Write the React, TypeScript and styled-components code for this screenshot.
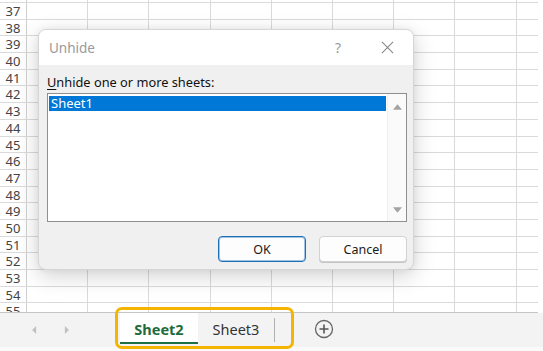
import React from 'react'
import styled, { createGlobalStyle } from 'styled-components'

const GlobalStyle = createGlobalStyle`
  html, body {
    margin: 0;
    padding: 0;
    background: #ffffff;
  }
  body {
    font-family: 'Noto Sans', 'Open Sans', sans-serif;
  }
`

const ROWS = Array.from({ length: 19 }, (_, i) => 37 + i)
const COLS = 9

export default function App() {
  return (
    <>
      <GlobalStyle />
      <Screen>
        <Sheet>
          <TopStub>
            <HeaderCell />
            {Array.from({ length: COLS }).map((_, c) => (
              <Cell key={c} />
            ))}
          </TopStub>
          {ROWS.map((r) => (
            <Row key={r}>
              <HeaderCell>{r}</HeaderCell>
              {Array.from({ length: COLS }).map((_, c) => (
                <Cell key={c} />
              ))}
            </Row>
          ))}
        </Sheet>

        <TabBar>
          <NavArrows>
            <Arrow viewBox="0 0 6 10">
              <path d="M5 0 L0 5 L5 10 Z" />
            </Arrow>
            <Arrow viewBox="0 0 6 10">
              <path d="M1 0 L6 5 L1 10 Z" />
            </Arrow>
          </NavArrows>
          <Tabs>
            <Tab active>Sheet2</Tab>
            <Tab>Sheet3</Tab>
            <TabDivider />
          </Tabs>
          <AddSheet viewBox="0 0 20 20">
            <circle cx="10" cy="10" r="8.5" fill="none" stroke="#666" strokeWidth="1.3" />
            <path d="M10 5.5 V14.5 M5.5 10 H14.5" stroke="#555" strokeWidth="1.6" />
          </AddSheet>
        </TabBar>
        <BottomEdge />

        <Highlight />

        <Dialog>
          <TitleBar>
            <Title>Unhide</Title>
            <TitleIcons>
              <HelpMark>?</HelpMark>
              <CloseIcon viewBox="0 0 14 14">
                <path d="M1 1 L13 13 M13 1 L1 13" stroke="#8a8a8a" strokeWidth="1.2" />
              </CloseIcon>
            </TitleIcons>
          </TitleBar>
          <Body>
            <Label>
              <u>U</u>nhide one or more sheets:
            </Label>
            <ListBox>
              <Items>
                <Item selected>Sheet1</Item>
              </Items>
              <ScrollBar>
                <ScrollArrow viewBox="0 0 10 6">
                  <path d="M0 6 L5 0 L10 6 Z" />
                </ScrollArrow>
                <ScrollArrow viewBox="0 0 10 6">
                  <path d="M0 0 L5 6 L10 0 Z" />
                </ScrollArrow>
              </ScrollBar>
            </ListBox>
            <Buttons>
              <Button primary>OK</Button>
              <Button>Cancel</Button>
            </Buttons>
          </Body>
        </Dialog>
      </Screen>
    </>
  )
}

const Screen = styled.div`
  position: relative;
  width: 543px;
  height: 351px;
  overflow: hidden;
  display: flex;
  flex-direction: column;
  background: #ffffff;
`

const Sheet = styled.div`
  height: 313px;
  width: 538px;
  overflow: hidden;
  border-bottom: 1px solid #c6c6c6;
  box-sizing: border-box;
`

const Row = styled.div`
  display: flex;
  height: 16.7px;
  box-sizing: border-box;
  border-bottom: 1px solid #dadada;
`

const TopStub = styled(Row)`
  height: 3px;
`

const HeaderCell = styled.div`
  width: 27px;
  flex: none;
  box-sizing: border-box;
  border-right: 1px solid #cfcfcf;
  font-size: 13px;
  line-height: 16px;
  color: #444;
  text-align: center;
`

const Cell = styled.div`
  width: 61.2px;
  flex: none;
  box-sizing: border-box;
  border-right: 1px solid #dadada;
`

const TabBar = styled.div`
  height: 34px;
  background: #f3f3f3;
  display: flex;
  align-items: stretch;
`

const BottomEdge = styled.div`
  flex: 1;
  background: #fafafa;
`

const NavArrows = styled.div`
  width: 120px;
  display: flex;
  align-items: center;
  gap: 27px;
  padding-left: 32px;
  box-sizing: border-box;
`

const Arrow = styled.svg`
  width: 5px;
  height: 8px;
  fill: #c0c0c0;
`

const Tabs = styled.div`
  display: flex;
  align-items: stretch;
  padding-bottom: 3px;
`

const Tab = styled.div<{ active?: boolean }>`
  width: ${(p) => (p.active ? 78 : 76)}px;
  display: flex;
  align-items: center;
  justify-content: center;
  font-size: 14.5px;
  font-weight: ${(p) => (p.active ? 700 : 400)};
  color: ${(p) => (p.active ? '#1e6b3c' : '#333')};
  background: ${(p) => (p.active ? '#ffffff' : 'transparent')};
  border-bottom: 2px solid ${(p) => (p.active ? '#1e7145' : 'transparent')};
  padding-top: 2px;
  box-sizing: border-box;
`

const TabDivider = styled.div`
  width: 1px;
  margin: 5px 0 2px;
  background: #b0b0b0;
`

const AddSheet = styled.svg`
  width: 20px;
  height: 20px;
  align-self: center;
  margin-left: 39px;
  margin-bottom: 2px;
`

const Highlight = styled.div`
  position: absolute;
  left: 115px;
  top: 307px;
  width: 179px;
  height: 42px;
  box-sizing: border-box;
  border: 3px solid #f5b400;
  border-radius: 7px;
  pointer-events: none;
`

const Dialog = styled.div`
  position: absolute;
  left: 38px;
  top: 29px;
  width: 376px;
  height: 241px;
  border-radius: 8px;
  overflow: hidden;
  background: #f0f0f0;
  border: 1px solid #d6d6d6;
  box-sizing: border-box;
  box-shadow: 0 6px 22px rgba(0, 0, 0, 0.18), 0 0 6px rgba(0, 0, 0, 0.06);
  display: flex;
  flex-direction: column;
`

const TitleBar = styled.div`
  height: 35px;
  background: #ffffff;
  display: flex;
  align-items: center;
  justify-content: space-between;
  padding: 0 19px 0 10px;
  flex: none;
`

const Title = styled.div`
  font-size: 13.5px;
  color: #9a9a9a;
`

const TitleIcons = styled.div`
  display: flex;
  align-items: center;
  gap: 40px;
`

const HelpMark = styled.span`
  font-size: 14px;
  color: #9a9a9a;
`

const CloseIcon = styled.svg`
  width: 13px;
  height: 13px;
`

const Body = styled.div`
  flex: 1;
  display: flex;
  flex-direction: column;
  padding: 9px 6px 7px 8px;
`

const Label = styled.div`
  font-size: 12.8px;
  color: #111;
  line-height: 16px;
  margin-bottom: 3px;

  u {
    text-decoration-thickness: 1px;
    text-underline-offset: 2px;
  }
`

const ListBox = styled.div`
  height: 129px;
  border: 1px solid #8f8f8f;
  background: #ffffff;
  box-sizing: border-box;
  display: flex;
`

const Items = styled.div`
  flex: 1;
  padding: 2px 1px;
`

const Item = styled.div<{ selected?: boolean }>`
  height: 15px;
  line-height: 15px;
  font-size: 13px;
  padding-left: 2px;
  color: ${(p) => (p.selected ? '#ffffff' : '#111')};
  background: ${(p) => (p.selected ? '#0078d7' : 'transparent')};
`

const ScrollBar = styled.div`
  width: 18px;
  background: #fafafa;
  border-left: 1px solid #f0f0f0;
  display: flex;
  flex-direction: column;
  justify-content: space-between;
  align-items: center;
  padding: 10px 0 8px;
`

const ScrollArrow = styled.svg`
  width: 9px;
  height: 6px;
  fill: #a3a3a3;
`

const Buttons = styled.div`
  margin-top: auto;
  display: flex;
  justify-content: flex-end;
  gap: 13px;
`

const Button = styled.div<{ primary?: boolean }>`
  width: 88px;
  height: 26px;
  box-sizing: border-box;
  display: flex;
  align-items: center;
  justify-content: center;
  font-size: 12.5px;
  color: #1a1a1a;
  background: #fdfdfd;
  border-radius: 4px;
  border: 1px solid ${(p) => (p.primary ? '#1f6fb5' : '#d2d2d2')};
  box-shadow: ${(p) => (p.primary ? 'inset 0 0 0 1px #9fc3e6' : '0 1px 0 #c4c4c4')};
`
